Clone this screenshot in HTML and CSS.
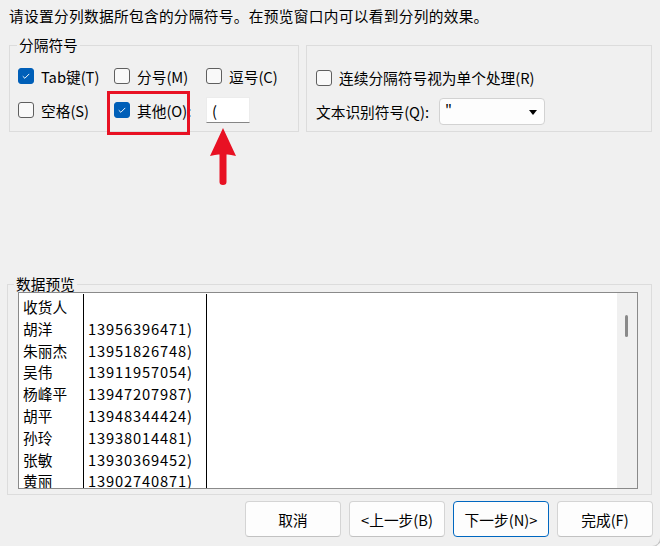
FILE: index.html
```html
<!DOCTYPE html>
<html lang="zh-CN">
<head>
    <meta charset="UTF-8">
    <meta name="viewport" content="width=device-width, initial-scale=1.0">
    <title>文本分列向导</title>
    <link rel="stylesheet" href="styles.css">
</head>
<body>
    <div class="window">
        <p class="intro">请设置分列数据所包含的分隔符号。在预览窗口内可以看到分列的效果。</p>

        <div class="options">
            <fieldset class="group delimiters">
                <legend>分隔符号</legend>
                <div class="delim-grid">
                    <label class="check"><span class="box checked"><svg viewBox="0 0 16 16"><path d="M4.3 8.3 L6.7 10.6 L11.7 5.6"/></svg></span>Tab键(T)</label>
                    <label class="check"><span class="box"></span>分号(M)</label>
                    <label class="check"><span class="box"></span>逗号(C)</label>
                    <label class="check"><span class="box"></span>空格(S)</label>
                    <label class="check"><span class="box checked"><svg viewBox="0 0 16 16"><path d="M4.3 8.3 L6.7 10.6 L11.7 5.6"/></svg></span>其他(O):</label>
                    <span class="other-input">(</span>
                </div>
            </fieldset>

            <div class="group extra">
                <label class="check"><span class="box"></span>连续分隔符号视为单个处理(R)</label>
                <div class="quote-row">
                    <span class="quote-label">文本识别符号(Q):</span>
                    <span class="select">"<span class="caret"></span></span>
                </div>
            </div>
        </div>

        <fieldset class="group data">
            <legend>数据预览</legend>
            <div class="preview">
                <div class="preview-data">
                    <div class="col col-name">
                        <div class="cell">收货人</div>
                        <div class="cell">胡洋</div>
                        <div class="cell">朱丽杰</div>
                        <div class="cell">吴伟</div>
                        <div class="cell">杨峰平</div>
                        <div class="cell">胡平</div>
                        <div class="cell">孙玲</div>
                        <div class="cell">张敏</div>
                        <div class="cell">黄丽</div>
                    </div>
                    <div class="col col-phone">
                        <div class="cell"></div>
                        <div class="cell">13956396471)</div>
                        <div class="cell">13951826748)</div>
                        <div class="cell">13911957054)</div>
                        <div class="cell">13947207987)</div>
                        <div class="cell">13948344424)</div>
                        <div class="cell">13938014481)</div>
                        <div class="cell">13930369452)</div>
                        <div class="cell">13902740871)</div>
                    </div>
                    <div class="col col-rest"></div>
                </div>
                <div class="scrollbar"><span class="thumb"></span></div>
            </div>
        </fieldset>

        <div class="buttons">
            <button class="btn">取消</button>
            <button class="btn">&lt;上一步(B)</button>
            <button class="btn default">下一步(N)&gt;</button>
            <button class="btn">完成(F)</button>
        </div>

        <!-- annotation -->
        <div class="mark"></div>
        <svg class="arrow" viewBox="0 0 30 60">
            <path d="M14 1 L27 29 Q20 27 17.5 27.5 L17.5 55 Q17.5 58 14 58 Q10.5 58 10.5 55 L10.5 27.5 Q8 27 1 29 Z"/>
        </svg>
    </div>
</body>
</html>
```

FILE: styles.css
```css
/* Dialog base */
html {
    background: #fafafa;
}

body {
    margin: 0;
    font-family: "Noto Sans CJK SC", "Noto Sans", sans-serif;
    font-size: 14.7px;
    color: #000000;
}

.window {
    position: relative;
    width: 660px;
    height: 546px;
    background: #f0f0f0;
    border-bottom-right-radius: 8px;
    box-shadow: 0 0 0 1px #c4c4c4;
    overflow: hidden;
}

.intro {
    margin: 0;
    padding: 6px 0 0 9px;
    line-height: 20px;
    white-space: nowrap;
    letter-spacing: 0.3px;
}

/* Group boxes */
.group {
    margin: 0;
    padding: 0;
    border: 1px solid #dcdcdc;
    box-sizing: border-box;
}

.group legend {
    margin-left: 7px;
    padding: 0 2px;
    line-height: 16px;
}

.options {
    display: flex;
    gap: 7px;
    margin-top: 11px;
    padding-left: 9px;
}

.delimiters {
    width: 290px;
    padding: 6px 0 4px 0;
}

.delim-grid {
    display: grid;
    grid-template-columns: 96px 92px auto;
    grid-auto-rows: 34px;
    align-items: center;
    padding-left: 8px;
}

.extra {
    width: 346px;
    margin-top: 8px;
    padding: 23px 0 4px 9px;
}

.check {
    display: flex;
    align-items: center;
    gap: 7px;
    white-space: nowrap;
}

.box {
    width: 16px;
    height: 16px;
    box-sizing: border-box;
    border: 1px solid #5f5f5f;
    border-radius: 3px;
    background: #f9f9f9;
    flex-shrink: 0;
}

.box.checked {
    border-color: #005fb8;
    background: #005fb8;
}

.box svg {
    display: block;
    width: 14px;
    height: 14px;
    fill: none;
    stroke: #ffffff;
    stroke-width: 1.1;
}

.other-input {
    width: 44px;
    height: 26px;
    box-sizing: border-box;
    padding-left: 5px;
    line-height: 25px;
    background: #ffffff;
    border: 1px solid #ececec;
    border-bottom-color: #868686;
}

.extra .check {
    height: 17px;
}

.quote-row {
    display: flex;
    align-items: center;
    gap: 8px;
    margin-top: 12px;
}

.quote-label {
    width: 115px;
    white-space: nowrap;
}

.select {
    position: relative;
    width: 106px;
    height: 27px;
    box-sizing: border-box;
    padding-left: 5px;
    line-height: 24px;
    background: #fdfdfd;
    border: 1px solid #d2d2d2;
    border-radius: 4px;
}

.caret {
    position: absolute;
    right: 7px;
    top: 11px;
    border-left: 4px solid transparent;
    border-right: 4px solid transparent;
    border-top: 5px solid #000000;
}

/* Data preview */
.data {
    width: 645px;
    margin: 144px 0 0 7px;
    padding: 0 13px 5px 10px;
}

.data legend {
    margin-left: -4px;
}

.preview {
    display: flex;
    height: 197px;
    box-sizing: border-box;
    border: 1px solid #8a8a8a;
    background: #ffffff;
    overflow: hidden;
}

.preview-data {
    flex: 1;
    display: flex;
    padding-top: 1px;
}

.col {
    padding-top: 2px;
    border-right: 1px solid #000000;
}

.col-name {
    width: 65px;
    box-sizing: border-box;
}

.col-phone {
    width: 123px;
    box-sizing: border-box;
}

.col-rest {
    flex: 1;
    border-right: none;
}

.cell {
    height: 21.8px;
    line-height: 21.8px;
    padding-left: 4px;
    white-space: nowrap;
}

.col-phone .cell {
    letter-spacing: 0.85px;
}

.scrollbar {
    position: relative;
    width: 20px;
    background: #f0f0f0;
}

.thumb {
    position: absolute;
    left: 8px;
    top: 22px;
    width: 3px;
    height: 22px;
    border-radius: 2px;
    background: #8a8a8a;
}

/* Buttons */
.buttons {
    display: flex;
    justify-content: flex-end;
    gap: 8px;
    margin-top: 6px;
    padding-right: 7px;
}

.btn {
    width: 96px;
    height: 36px;
    font-family: inherit;
    font-size: 14.7px;
    color: #000000;
    background: #fdfdfd;
    border: 1px solid #d4d4d4;
    border-bottom-color: #c2c2c2;
    border-radius: 4px;
    padding: 0;
}

.btn.default {
    border-color: #0067c0;
}

/* Red annotation */
.mark {
    position: absolute;
    left: 107px;
    top: 91px;
    width: 83px;
    height: 44px;
    box-sizing: border-box;
    border: 3px solid #e81123;
}

.arrow {
    position: absolute;
    left: 209px;
    top: 127px;
    width: 30px;
    height: 60px;
    fill: #e81123;
}
```
